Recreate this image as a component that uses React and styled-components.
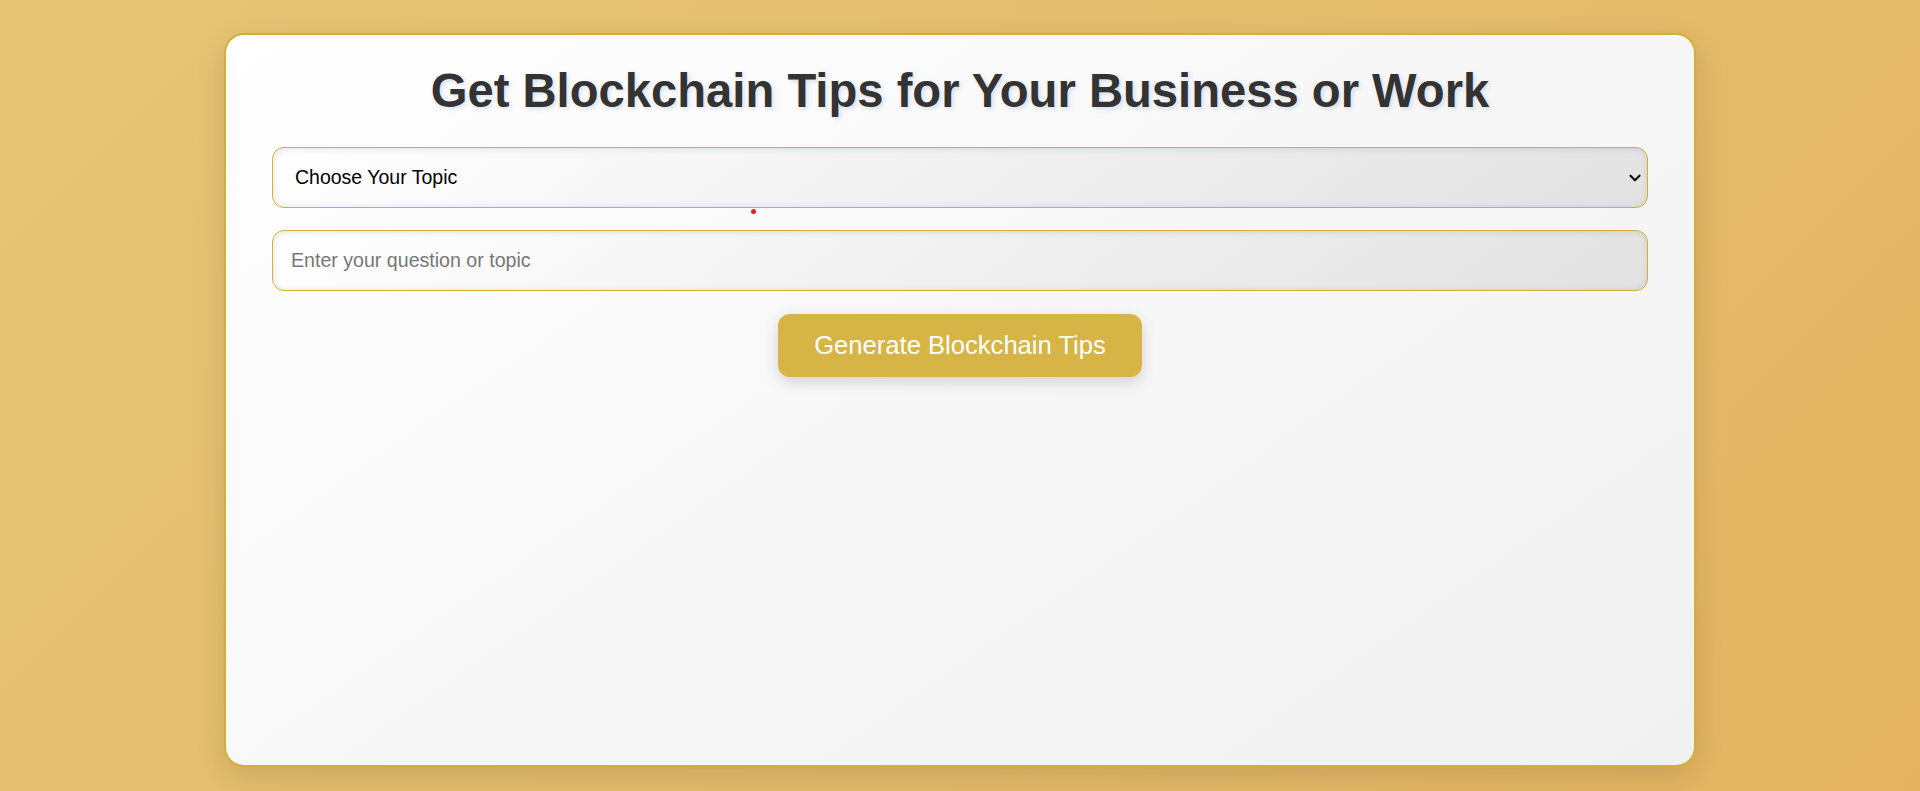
import styled, { createGlobalStyle } from "styled-components";
import { ChevronDown } from "lucide-react";

const GlobalStyle = createGlobalStyle`
  * { box-sizing: border-box; }
  html, body {
    margin: 0;
    padding: 0;
  }
  body {
    font-family: "Liberation Sans", Arial, sans-serif;
    background: linear-gradient(135deg, #e5c576 0%, #e4bb6a 60%, #e4b462 100%);
    min-height: 100vh;
  }
`;

const Page = styled.main`
  display: flex;
  justify-content: center;
  padding: 33px 0 24px;
`;

const Card = styled.section`
  position: relative;
  width: 1472px;
  min-height: 734px;
  padding: 28px 46px 40px;
  background: linear-gradient(145deg, #ffffff 0%, #f7f7f7 50%, #f1f1f1 100%);
  border: 2px solid #d4af37;
  border-radius: 20px;
  box-shadow: 0 10px 30px rgba(0, 0, 0, 0.12);
  display: flex;
  flex-direction: column;
  align-items: center;
`;

const Title = styled.h1`
  margin: 0 0 29px;
  font-size: 47.2px;
  font-weight: bold;
  color: #333;
  text-align: center;
  text-shadow: 2px 2px 4px rgba(60, 100, 160, 0.18);
`;

const fieldStyle = `
  width: 100%;
  font-family: "Liberation Sans", Arial, sans-serif;
  font-size: 19.2px;
  line-height: 23px;
  padding: 18px;
  border: 1px solid #d4af37;
  border-radius: 12px;
  background: linear-gradient(145deg, #ffffff 0%, #efefef 55%, #e2e2e2 100%);
  box-shadow: inset 2px 2px 6px rgba(0, 0, 0, 0.08), inset -2px -2px 6px rgba(0, 0, 0, 0.04);
  outline: none;
`;

const SelectWrap = styled.div`
  position: relative;
  width: 100%;
  margin-bottom: 22px;

  svg {
    position: absolute;
    right: 4px;
    top: 50%;
    transform: translateY(-50%);
    pointer-events: none;
    color: #111;
  }
`;

const TopicSelect = styled.select`
  ${fieldStyle}
  appearance: none;
  -webkit-appearance: none;
  display: block;
  color: #000;
  font-size: 19.5px;
  padding: 18px 40px 18px 22px;
`;

const QuestionInput = styled.input`
  ${fieldStyle}
  display: block;
  color: #333;
  font-size: 19.6px;
  margin-bottom: 23px;
  &::placeholder { color: #777; }
`;

const GenerateButton = styled.button`
  font-family: "Liberation Sans", Arial, sans-serif;
  font-size: 25.6px;
  color: #fff;
  background: #d6b446;
  border: none;
  border-radius: 12px;
  padding: 17px 36px;
  box-shadow: 0 5px 15px rgba(0, 0, 0, 0.15);
  cursor: pointer;
`;

const Dot = styled.span`
  position: absolute;
  left: 525px;
  top: 174px;
  width: 5px;
  height: 5px;
  border-radius: 50%;
  background: #e0201a;
`;

export default function App() {
  return (
    <>
      <GlobalStyle />
      <Page>
        <Card>
          <Title>Get Blockchain Tips for Your Business or Work</Title>
          <SelectWrap>
            <TopicSelect defaultValue="">
              <option value="">Choose Your Topic</option>
              <option value="finance">Finance</option>
              <option value="supply">Supply Chain</option>
              <option value="health">Healthcare</option>
            </TopicSelect>
            <ChevronDown size={18} strokeWidth={3} />
          </SelectWrap>
          <Dot />
          <QuestionInput type="text" placeholder="Enter your question or topic" />
          <GenerateButton>Generate Blockchain Tips</GenerateButton>
        </Card>
      </Page>
    </>
  );
}
